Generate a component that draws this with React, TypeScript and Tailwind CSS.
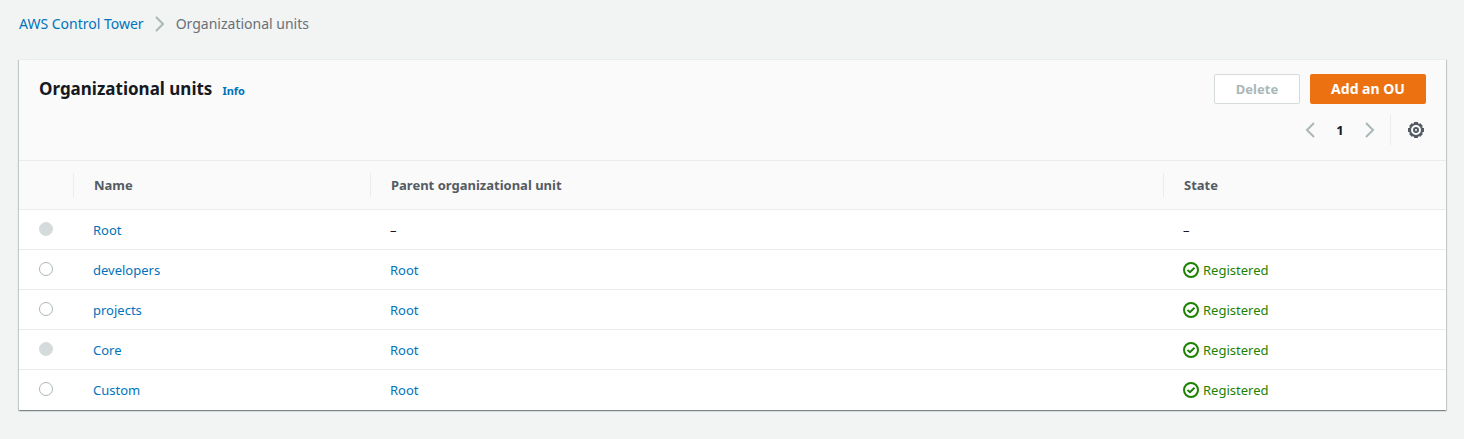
import type { ReactNode } from "react";

type OrgUnit = {
  name: string;
  parent?: string;
  registered: boolean;
  disabled: boolean;
};

export default function App() {
  return (
    <div className="min-h-screen bg-[#f2f3f3] pl-[19px] pr-[18px] pt-3.5 pb-7 font-['Noto_Sans','Open_Sans',sans-serif] text-[13px] leading-5 text-[#16191f]">
      {/* Breadcrumbs */}
      <nav aria-label="Breadcrumbs" className="mb-[25px]">
        <ol className="flex items-center text-sm">
          <li>
            <a href="#" className="text-[#0073bb]">AWS Control Tower</a>
          </li>
          <li aria-hidden="true" className="px-2">
            <Chevron direction="right" />
          </li>
          <li className="text-[#687078]">Organizational units</li>
        </ol>
      </nav>

      <main className="border-t border-[#eaeded] bg-white shadow-[0_1px_1px_0_rgba(0,28,36,0.3),1px_1px_1px_0_rgba(0,28,36,0.15),-1px_1px_1px_0_rgba(0,28,36,0.15)]">
        {/* Table header */}
        <header className="border-b border-[#eaeded] bg-[#fafafa] px-5 pt-3.5 pb-[15px]">
          <div className="flex items-center justify-between">
            <div className="flex items-baseline gap-2.5 pt-0.5">
              <h1 className="text-[17px] font-bold">Organizational units</h1>
              <a href="#" className="text-[11px] font-bold text-[#0073bb]">Info</a>
            </div>
            <div className="flex gap-2.5">
              <button
                disabled
                className="h-[30px] w-[86px] rounded-xs border border-[#d5dbdb] bg-white font-bold text-[#aab7b8]"
              >
                Delete
              </button>
              <button className="h-[30px] w-[116px] rounded-xs bg-[#ec7211] text-sm font-bold text-white">
                Add an OU
              </button>
            </div>
          </div>
          <div className="mt-[11px] flex h-[30px] items-center justify-end">
            <button disabled aria-label="Previous page">
              <Chevron direction="left" />
            </button>
            <button aria-label="Page 1" className="w-11 font-bold">1</button>
            <button disabled aria-label="Next page">
              <Chevron direction="right" />
            </button>
            <div className="ml-3 h-[30px] border-l border-[#eaeded]" />
            <button aria-label="Preferences" className="ml-[17px] mr-0.5">
              <GearIcon />
            </button>
          </div>
        </header>

        <table className="w-full table-fixed border-separate border-spacing-0 text-left">
          <thead className="bg-[#fafafa] text-[#545b64]">
            <tr className="h-[49px]">
              <th className="w-[54px] border-b border-[#eaeded]" aria-label="Selection" />
              <HeaderCell className="w-[297px]">Name</HeaderCell>
              <HeaderCell>Parent organizational unit</HeaderCell>
              <HeaderCell className="w-[283px]">State</HeaderCell>
            </tr>
          </thead>
          <tbody className="[&>tr:last-child>td]:border-transparent">
            {units.map((unit) => (
              <tr key={unit.name} className="h-10">
                <Cell>
                  <input
                    type="radio"
                    name="unit"
                    aria-label={unit.name}
                    disabled={unit.disabled}
                    className="mb-0.5 block size-3.5 appearance-none rounded-full border border-[#aab7b8] bg-white checked:border-4 checked:border-[#0073bb] disabled:border-[#d5dbdb] disabled:bg-[#d5dbdb]"
                  />
                </Cell>
                <Cell>
                  <a href="#" className="text-[#0073bb]">{unit.name}</a>
                </Cell>
                <Cell>
                  {unit.parent ? <a href="#" className="text-[#0073bb]">{unit.parent}</a> : "–"}
                </Cell>
                <Cell>
                  {unit.registered ? (
                    <span className="flex items-center gap-1 text-[#1d8102]">
                      <CheckIcon />
                      Registered
                    </span>
                  ) : (
                    "–"
                  )}
                </Cell>
              </tr>
            ))}
          </tbody>
        </table>
      </main>
    </div>
  );
}

function HeaderCell({ children, className = "" }: { children: ReactNode; className?: string }) {
  return (
    <th className={`border-b border-[#eaeded] font-bold ${className}`}>
      <div className="border-l border-[#eaeded] py-0.5 pl-5">{children}</div>
    </th>
  );
}

function Cell({ children }: { children: ReactNode }) {
  return <td className="border-b border-[#eaeded] pt-px pl-5">{children}</td>;
}

function Chevron({ direction }: { direction: "left" | "right" }) {
  return (
    <svg viewBox="0 0 16 16" className="block size-4" fill="none" stroke="#aab7b8" strokeWidth="2">
      <path d={direction === "left" ? "M12 1 5 8l7 7" : "M4 1l7 7-7 7"} />
    </svg>
  );
}

function GearIcon() {
  return (
    <svg viewBox="0 0 16 16" className="block size-4" fill="none" stroke="#545b64" strokeWidth="2">
      <circle cx="8" cy="8" r="6" />
      <path
        strokeWidth="4"
        d="M8 0v2M8 14v2M0 8h2M14 8h2M2.500 2.500l1.300 1.300M12.200 12.200l1.300 1.300M2.500 13.500l1.300-1.300M12.200 3.800l1.300-1.300"
      />
      <circle cx="8" cy="8" r="2" />
    </svg>
  );
}

function CheckIcon() {
  return (
    <svg viewBox="0 0 16 16" className="block size-4" fill="none" stroke="#1d8102" strokeWidth="2">
      <circle cx="8" cy="8" r="7" />
      <path d="M4.5 8 7 10.2l4.500-4.500" />
    </svg>
  );
}

const units: OrgUnit[] = [
  { name: "Root", registered: false, disabled: true },
  { name: "developers", parent: "Root", registered: true, disabled: false },
  { name: "projects", parent: "Root", registered: true, disabled: false },
  { name: "Core", parent: "Root", registered: true, disabled: true },
  { name: "Custom", parent: "Root", registered: true, disabled: false },
];
